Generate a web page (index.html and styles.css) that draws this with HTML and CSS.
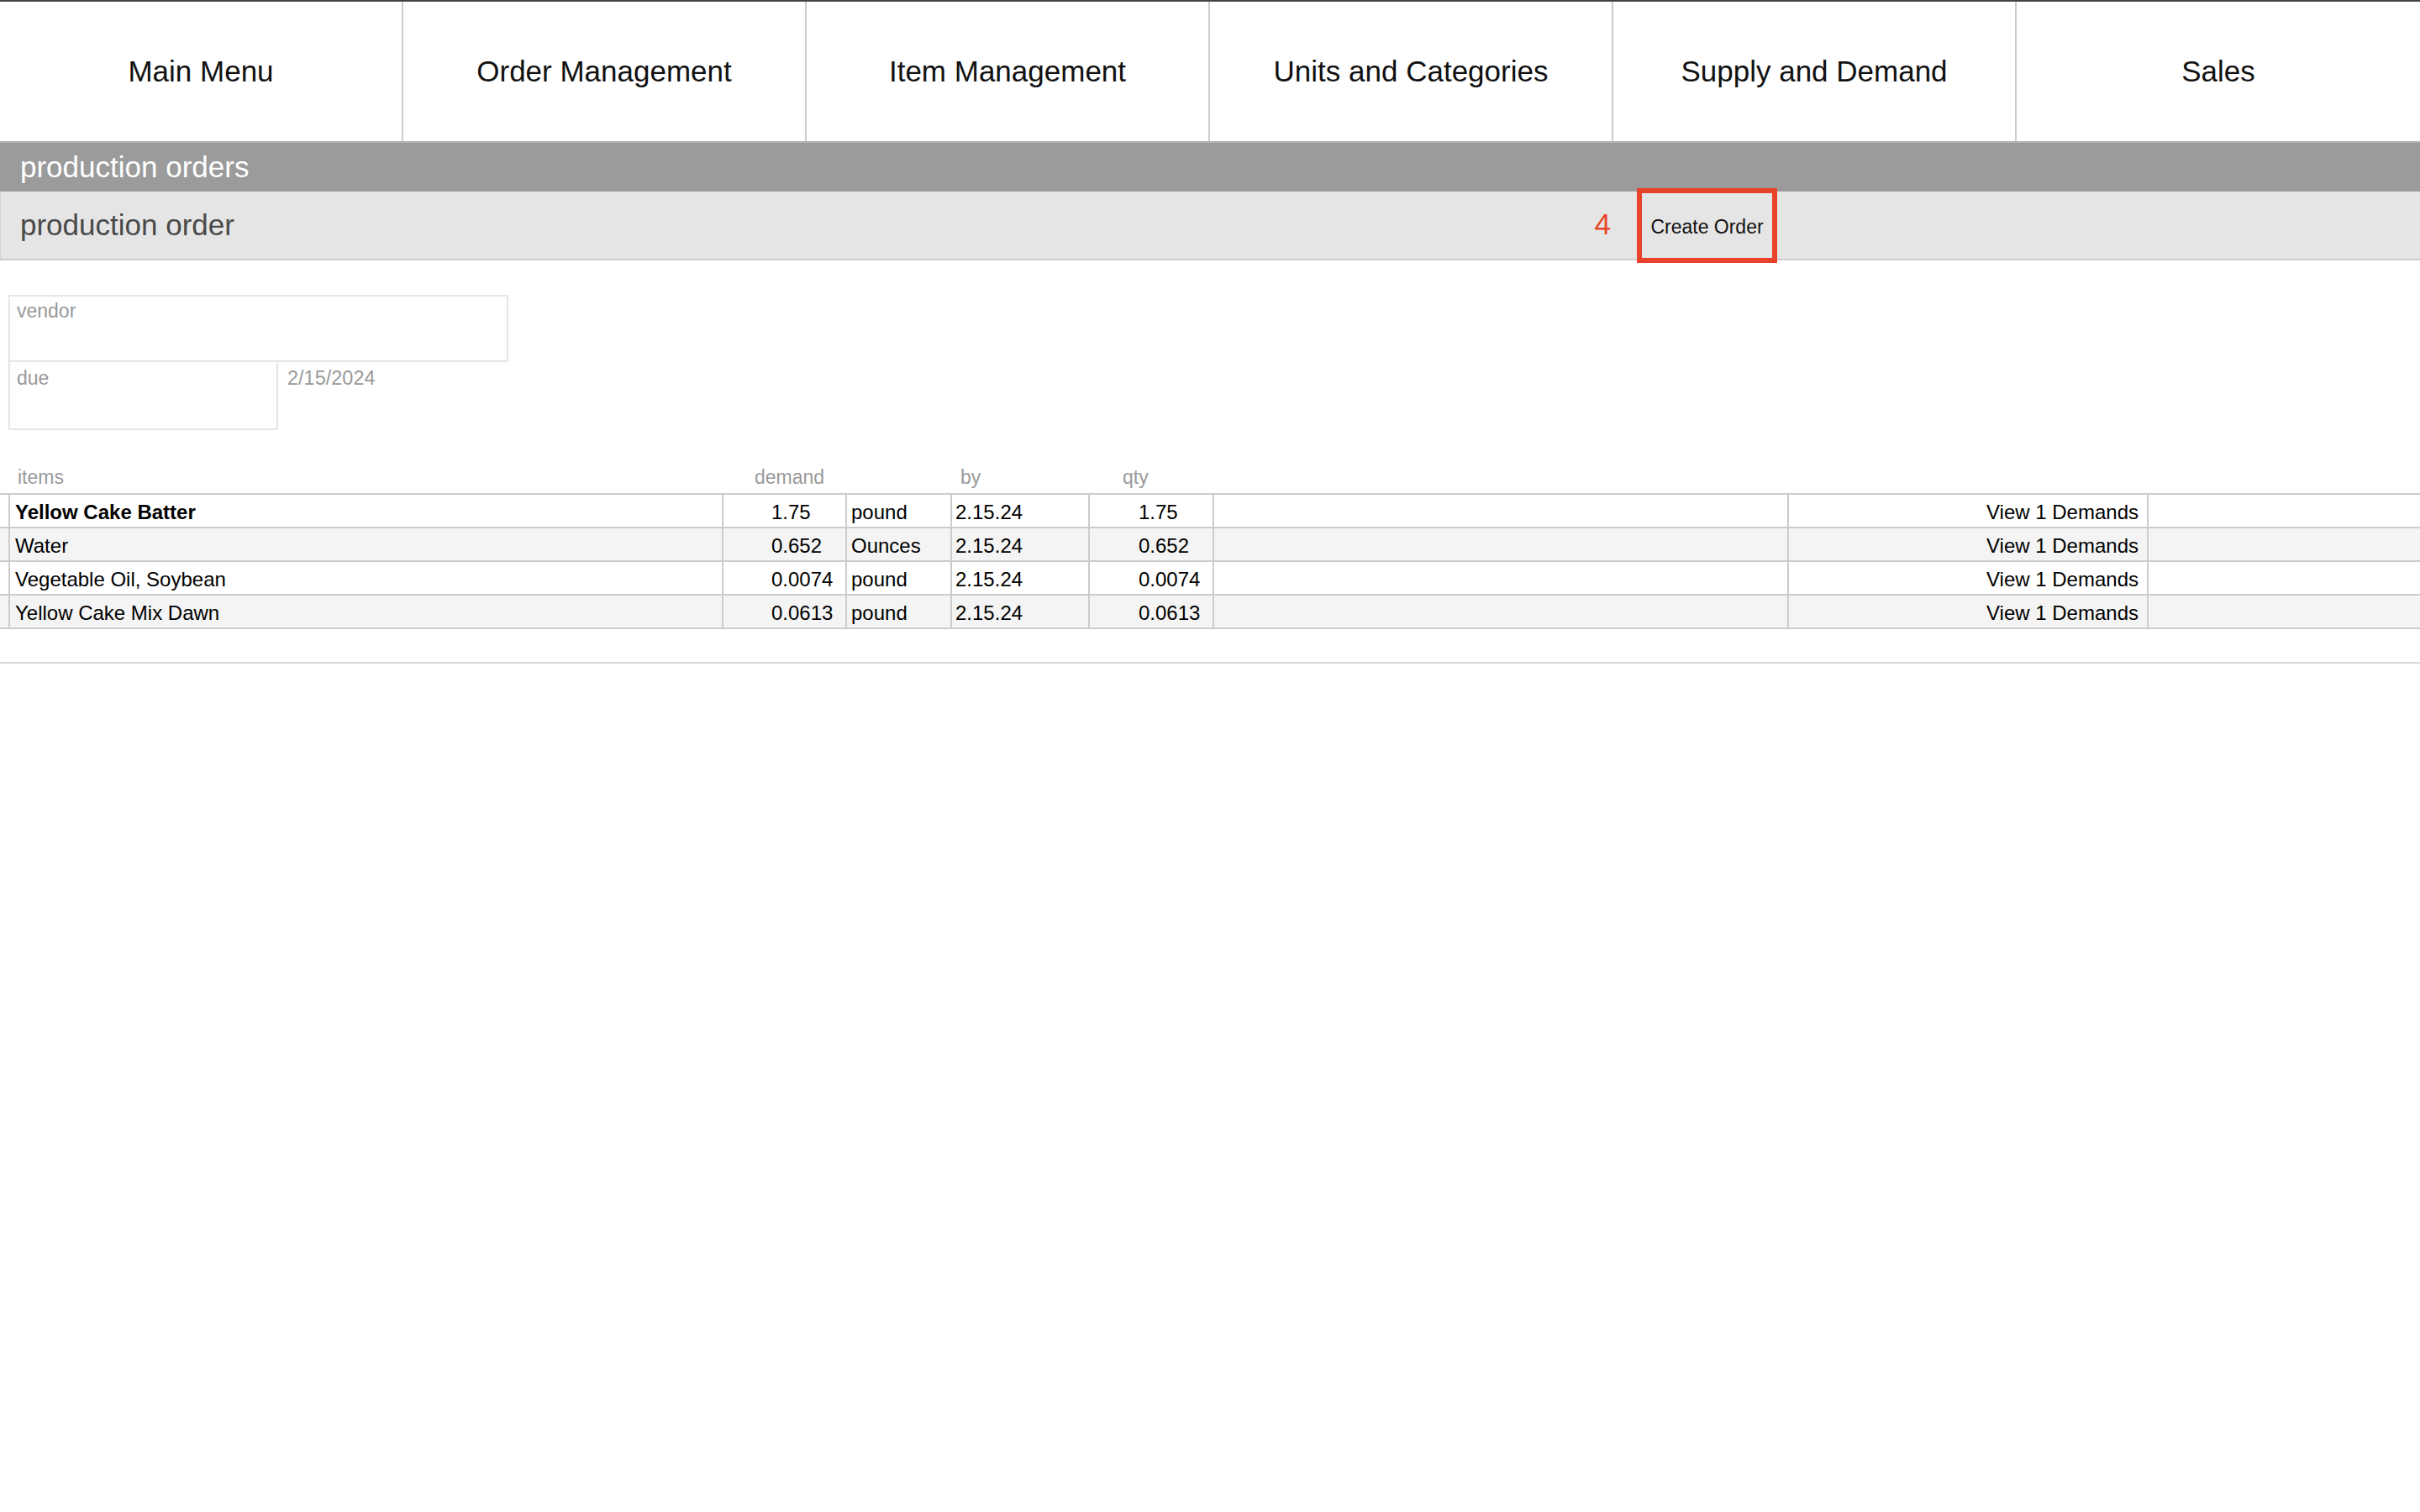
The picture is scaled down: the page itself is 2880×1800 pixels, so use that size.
FILE: index.html
```html
<!DOCTYPE html>
<html lang="en">
<head>
<meta charset="utf-8">
<title>production orders</title>
<link rel="stylesheet" href="styles.css">
</head>
<body>
<nav class="topnav">
  <a class="nav-item">Main Menu</a>
  <a class="nav-item">Order Management</a>
  <a class="nav-item">Item Management</a>
  <a class="nav-item">Units and Categories</a>
  <a class="nav-item">Supply and Demand</a>
  <a class="nav-item last">Sales</a>
</nav>

<div class="section-bar">production orders</div>

<div class="order-bar">
  <div class="order-title">production order</div>
  <div class="order-count">4</div>
  <button class="create-btn">Create Order</button>
</div>

<div class="form">
  <div class="field vendor"><span class="label">vendor</span></div>
  <div class="due-row">
    <div class="field due"><span class="label">due</span></div>
    <div class="due-value">2/15/2024</div>
  </div>
</div>

<div class="grid head">
  <div class="sp"></div>
  <div class="h h-items">items</div>
  <div class="h h-demand">demand</div>
  <div class="h"></div>
  <div class="h h-by">by</div>
  <div class="h h-qty">qty</div>
  <div class="h"></div>
  <div class="h"></div>
  <div class="h"></div>
</div>

<div class="table">
  <div class="grid row">
    <div class="sp"></div>
    <div class="c c-item bold">Yellow Cake Batter</div>
    <div class="c c-num">1.75</div>
    <div class="c c-unit">pound</div>
    <div class="c c-date">2.15.24</div>
    <div class="c c-qty">1.75</div>
    <div class="c"></div>
    <div class="c c-view">View 1 Demands</div>
    <div class="c"></div>
  </div>
  <div class="grid row alt">
    <div class="sp"></div>
    <div class="c c-item">Water</div>
    <div class="c c-num">0.652</div>
    <div class="c c-unit">Ounces</div>
    <div class="c c-date">2.15.24</div>
    <div class="c c-qty">0.652</div>
    <div class="c"></div>
    <div class="c c-view">View 1 Demands</div>
    <div class="c"></div>
  </div>
  <div class="grid row">
    <div class="sp"></div>
    <div class="c c-item">Vegetable Oil, Soybean</div>
    <div class="c c-num">0.0074</div>
    <div class="c c-unit">pound</div>
    <div class="c c-date">2.15.24</div>
    <div class="c c-qty">0.0074</div>
    <div class="c"></div>
    <div class="c c-view">View 1 Demands</div>
    <div class="c"></div>
  </div>
  <div class="grid row alt">
    <div class="sp"></div>
    <div class="c c-item">Yellow Cake Mix Dawn</div>
    <div class="c c-num">0.0613</div>
    <div class="c c-unit">pound</div>
    <div class="c c-date">2.15.24</div>
    <div class="c c-qty">0.0613</div>
    <div class="c"></div>
    <div class="c c-view">View 1 Demands</div>
    <div class="c"></div>
  </div>
</div>

<div class="table-foot"></div>
</body>
</html>
```
FILE: styles.css
```css
* { box-sizing: border-box; }

html, body {
  margin: 0;
  padding: 0;
  background: #ffffff;
  font-family: "Liberation Sans", Arial, Helvetica, sans-serif;
  color: #000;
}

.topnav {
  display: grid;
  grid-template-columns: repeat(6, 1fr);
  height: 168px;
  border-top: 2px solid #444;
}

.nav-item {
  display: flex;
  align-items: center;
  justify-content: center;
  font-size: 35px;
  color: #111;
  border-right: 2px solid #cccccc;
  text-decoration: none;
}
.nav-item.last { border-right: none; }

.section-bar {
  height: 60px;
  background: #9b9b9b;
  border-top: 2px solid #b4b4b4;
  color: #ffffff;
  font-size: 35px;
  padding-left: 24px;
  display: flex;
  align-items: center;
}

.order-bar {
  height: 82px;
  background: #e5e5e5;
  border-bottom: 2px solid #cdcdcd;
  border-left: 1px solid #d2d2d2;
  display: flex;
  align-items: center;
}

.order-title {
  flex: 1;
  font-size: 35px;
  color: #4a4a4a;
  padding-left: 23px;
}

.order-count {
  font-size: 35px;
  color: #e8472b;
  margin-right: 31px;
  padding-bottom: 2px;
}

.create-btn {
  height: 89px;
  width: 167px;
  margin-right: 765px;
  border: 6px solid #e8432a;
  background: #e5e5e5;
  font-family: "Liberation Sans", Arial, Helvetica, sans-serif;
  font-size: 23px;
  color: #111;
  padding: 3px 0 0;
  margin-top: 1px;
}

.form {
  padding-top: 41px;
  padding-left: 10px;
}

.field {
  border: 2px solid #e5e5e5;
  padding: 4px 8px 0;
}
.label {
  font-size: 23px;
  line-height: 26px;
  color: #999999;
}
.vendor {
  width: 595px;
  height: 80px;
}
.due-row {
  display: flex;
}
.due {
  width: 321px;
  height: 81px;
  border-top: 0;
  padding-top: 6px;
}
.due-value {
  font-size: 23.5px;
  line-height: 26px;
  color: #999999;
  padding-left: 11px;
  padding-top: 6px;
}

.grid {
  display: grid;
  grid-template-columns: 10px 849px 147px 125px 164px 148px 684px 428px 1fr;
}

.head {
  margin-top: 43px;
  height: 32px;
}
.h {
  font-size: 23px;
  line-height: 26px;
  color: #999999;
  white-space: nowrap;
}
.h-items { padding-left: 11px; }
.h-demand { padding-left: 39px; }
.h-by { padding-left: 12px; }
.h-qty { padding-left: 41px; }

.table {
  border-top: 2px solid #cccccc;
}
.row {
  height: 40px;
  border-bottom: 2px solid #cccccc;
  background: #ffffff;
}
.row.alt { background: #f4f4f4; }

.c {
  border-left: 2px solid #cccccc;
  font-size: 24px;
  line-height: 38px;
  padding-top: 2px;
  white-space: nowrap;
  overflow: hidden;
}
.bold { font-weight: bold; }
.c-item { padding-left: 6px; }
.c-num { padding-left: 57px; }
.c-unit { padding-left: 5px; }
.c-date { padding-left: 4px; }
.c-qty { padding-left: 58px; }
.c-view { text-align: right; padding-right: 10px; }

.table-foot {
  height: 41px;
  border-bottom: 2px solid #d6d6d6;
}
```
